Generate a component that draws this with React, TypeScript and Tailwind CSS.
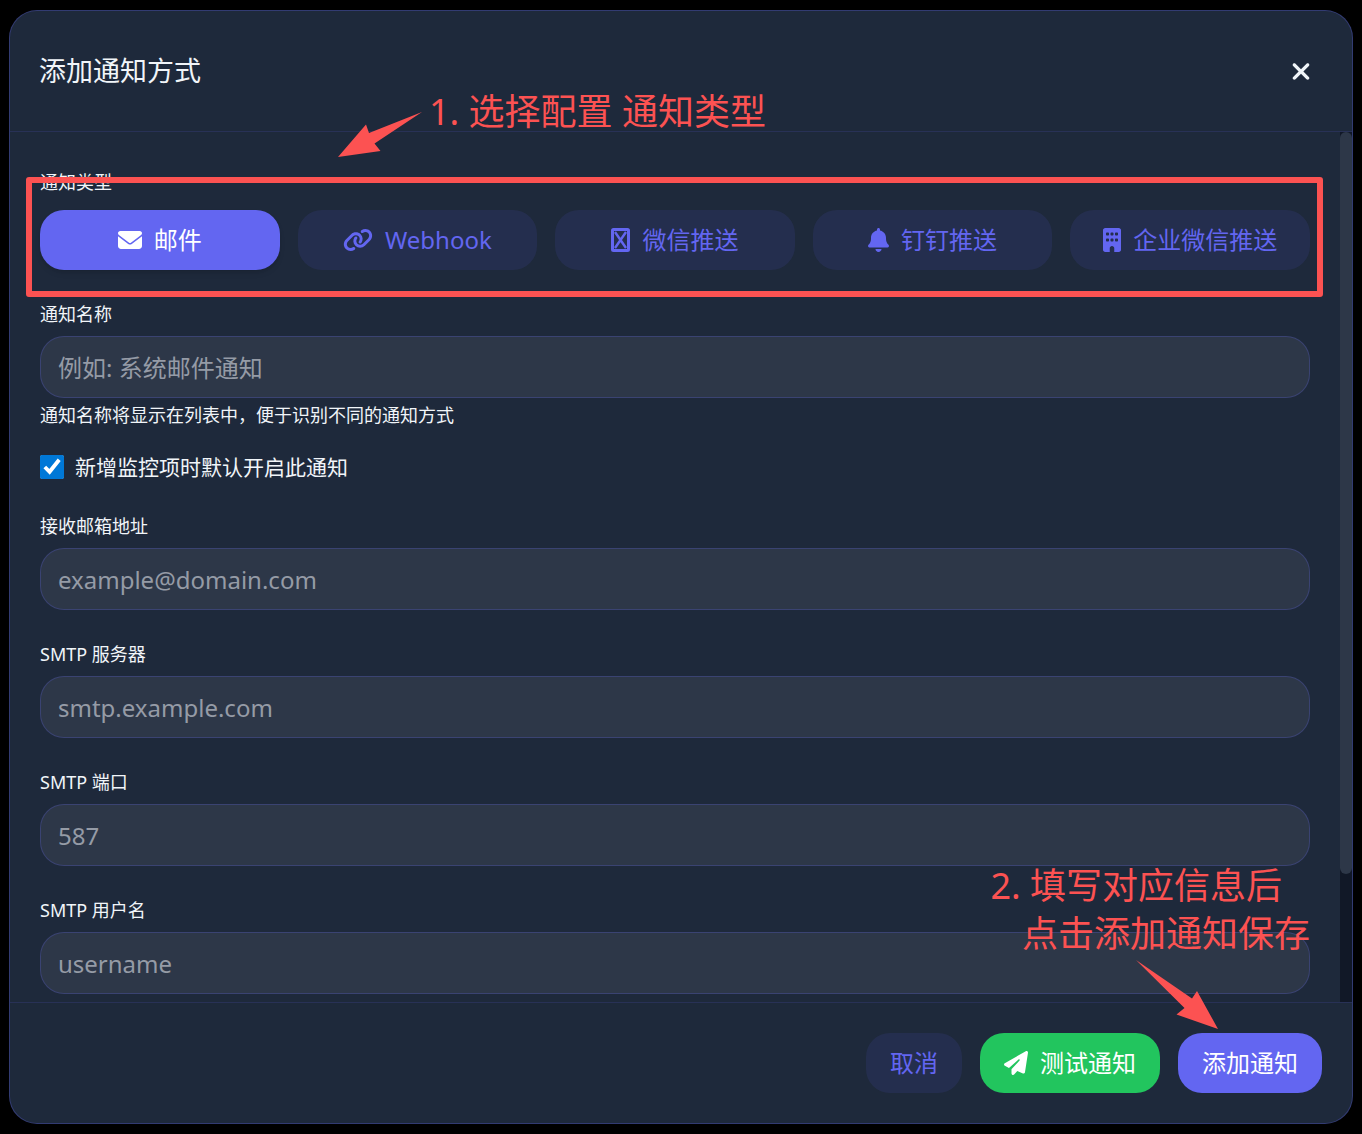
import { useState } from "react";
import type { ReactNode } from "react";
import { FaBell, FaBuilding, FaEnvelope, FaLink, FaPaperPlane, FaXmark } from "react-icons/fa6";

function MissingGlyph({ className }: { className?: string }) {
  return (
    <svg viewBox="0 0 19 24" className={className} fill="none" stroke="currentColor" aria-hidden="true">
      <rect x="1.5" y="1.5" width="16" height="21" rx="1" strokeWidth="3" />
      <path d="M4 4 15 20M15 4 4 20" strokeWidth="2.4" />
    </svg>
  );
}

type Channel = { id: string; label: string; icon: ReactNode };

const channels: Channel[] = [
  { id: "email", label: "邮件", icon: <FaEnvelope className="h-6 w-6" /> },
  { id: "webhook", label: "Webhook", icon: <FaLink className="h-6 w-[30px]" /> },
  { id: "wechat", label: "微信推送", icon: <MissingGlyph className="h-6 w-[19px]" /> },
  { id: "dingtalk", label: "钉钉推送", icon: <FaBell className="h-6 w-[21px]" /> },
  { id: "wecom", label: "企业微信推送", icon: <FaBuilding className="h-6 w-[18px]" /> },
];

type FieldProps = { id: string; label: string; placeholder: string; type?: string; hint?: string };

function Field({ id, label, placeholder, type = "text", hint }: FieldProps) {
  return (
    <div className="flex flex-col">
      <label htmlFor={id} className="mb-2.5 self-start text-lg leading-6">
        {label}
      </label>
      <input
        id={id}
        type={type}
        placeholder={placeholder}
        className="h-[62px] w-full rounded-3xl border border-[#6366f1]/25 bg-[#2d3748] px-[17px] text-2xl text-slate-100 outline-none placeholder:text-[#959ba6]"
      />
      {hint && <p className="mt-[5px] text-lg leading-6">{hint}</p>}
    </div>
  );
}

export default function App() {
  const [active, setActive] = useState("email");
  const [byDefault, setByDefault] = useState(true);

  return (
    <div className="min-h-screen bg-black px-[9px] py-2.5 font-['Noto_Sans','Noto_Sans_CJK_SC',sans-serif] text-slate-100">
      <div
        role="dialog"
        aria-labelledby="dialog-title"
        className="relative flex flex-col rounded-[28px] border border-[#6366f1]/30 bg-[#1e293b]"
      >
        <header className="flex items-center justify-between border-b border-[#6366f1]/15 px-[29px] py-[30px]">
          <h2 id="dialog-title" className="text-[27px] leading-[60px]">
            添加通知方式
          </h2>
          <button type="button" aria-label="关闭" className="flex h-[60px] w-11 items-center justify-center">
            <FaXmark className="h-[27px] w-5" />
          </button>
        </header>

        <div className="flex">
          <form className="flex min-w-0 flex-1 flex-col gap-8 pt-[38px] pr-[30px] pb-2 pl-[30px]">
            <div>
              <p className="mb-4 text-lg leading-6">通知类型</p>
              <div className="grid grid-cols-5 gap-[18px]">
                {channels.map((c) => (
                  <button
                    key={c.id}
                    type="button"
                    aria-pressed={active === c.id}
                    onClick={() => setActive(c.id)}
                    className={
                      active === c.id
                        ? "flex h-[60px] items-center justify-center gap-3 rounded-3xl bg-[#6366f1] text-2xl whitespace-nowrap text-white shadow-md"
                        : "flex h-[60px] items-center justify-center gap-3 rounded-3xl bg-[#6366f1]/10 text-2xl whitespace-nowrap text-[#6366f1]"
                    }
                  >
                    {c.icon}
                    {c.label}
                  </button>
                ))}
              </div>
            </div>

            <Field id="name" label="通知名称" placeholder="例如: 系统邮件通知" hint="通知名称将显示在列表中，便于识别不同的通知方式" />

            <label className="-mt-1 mb-[3px] flex items-center gap-[11px] self-start text-[21px] leading-6">
              <input
                type="checkbox"
                checked={byDefault}
                onChange={(e) => setByDefault(e.target.checked)}
                className="size-6 accent-[#0078d7]"
              />
              新增监控项时默认开启此通知
            </label>

            <Field id="email" label="接收邮箱地址" placeholder="example@domain.com" type="email" />
            <Field id="host" label="SMTP 服务器" placeholder="smtp.example.com" />
            <Field id="port" label="SMTP 端口" placeholder="587" />
            <Field id="user" label="SMTP 用户名" placeholder="username" />
          </form>
          <div className="flex w-3 flex-col bg-[#111827]">
            <div className="h-[742px] rounded-full bg-[#2d3748]" />
          </div>
        </div>

        <footer className="flex justify-end gap-[18px] border-t border-[#6366f1]/15 p-[30px] text-2xl">
          <button type="button" className="h-[60px] rounded-3xl bg-[#6366f1]/10 px-6 text-[#6366f1]">
            取消
          </button>
          <button type="button" className="flex h-[60px] items-center gap-3 rounded-3xl bg-[#22c55e] px-6 text-white">
            <FaPaperPlane className="size-6" />
            测试通知
          </button>
          <button type="button" className="h-[60px] rounded-3xl bg-[#6366f1] px-6 text-white">
            添加通知
          </button>
        </footer>

        {/* Tutorial callouts drawn over the dialog */}
        <div className="pointer-events-none absolute top-[166px] right-[29px] left-4 h-[120px] rounded-[3px] border-6 border-[#fc5252]" />
        <div className="pointer-events-none absolute top-[77px] left-[328px] flex text-[#fc5252]">
          <svg viewBox="0 0 84 46" className="mt-6 h-[46px] w-[84px]" fill="currentColor" aria-hidden="true">
            <path d="M84 0 31 21 28 12.5 0 45 42.5 39 36.5 31.5Z" />
          </svg>
          <p className="ml-[7px] text-4xl leading-12 whitespace-nowrap">1. 选择配置 通知类型</p>
        </div>
        <div className="pointer-events-none absolute right-[42px] bottom-[94px] flex flex-col text-[#fc5252]">
          <p className="mr-7 self-end text-4xl leading-12 whitespace-nowrap">2. 填写对应信息后</p>
          <p className="self-end text-4xl leading-12 whitespace-nowrap">点击添加通知保存</p>
          <svg viewBox="0 0 82 69" className="mt-[2px] mr-[92px] h-[69px] w-[82px] self-end" fill="currentColor" aria-hidden="true">
            <path d="M0 0 56 38.5 61 31 82 69 40.5 54.5 48.5 48Z" />
          </svg>
        </div>
      </div>
    </div>
  );
}
